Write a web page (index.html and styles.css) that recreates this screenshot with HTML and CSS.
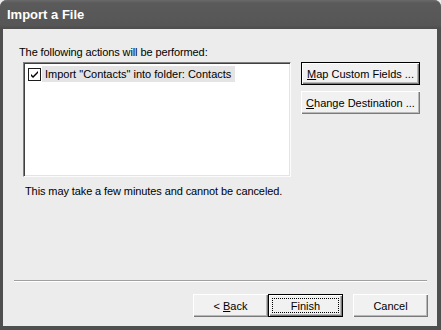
FILE: index.html
```html
<!DOCTYPE html>
<html>
<head>
<meta charset="utf-8">
<link rel="stylesheet" href="styles.css">
</head>
<body>
<div class="window">
  <div class="titlebar">Import a File</div>
  <div class="client">
    <div class="label">The following actions will be performed:</div>
    <div class="main-row">
      <div class="listbox">
        <div class="item">
          <span class="checkbox">
            <svg width="9" height="9" viewBox="0 0 9 9"><path d="M1 4 L3 6 L8 1 L8 3 L3 8 L1 6 Z" fill="#000"/></svg>
          </span>
          <span class="item-text">Import "Contacts" into folder: Contacts</span>
        </div>
      </div>
      <div class="side-buttons">
        <button class="btn btn-default"><u>M</u>ap Custom Fields ...</button>
        <button class="btn"><u>C</u>hange Destination ...</button>
      </div>
    </div>
    <div class="note">This may take a few minutes and cannot be canceled.</div>
    <div class="spacer"></div>
    <div class="separator"></div>
    <div class="footer">
      <button class="btn btn-small">&lt; <u>B</u>ack</button>
      <button class="btn btn-small btn-default btn-focus"><span class="focus">Finish</span></button>
      <button class="btn btn-small btn-cancel">Cancel</button>
    </div>
  </div>
</div>
</body>
</html>
```
FILE: styles.css
```css
* { box-sizing: border-box; }
html, body { margin: 0; padding: 0; background: #ececec; }
body {
  width: 441px;
  height: 330px;
  overflow: hidden;
  font-family: "Liberation Sans", Arial, sans-serif;
  font-size: 11px;
  color: #000;
}
.window {
  width: 441px;
  height: 330px;
  display: flex;
  flex-direction: column;
  background: #4f4f4f;
  border-radius: 7px 7px 0 0;
  box-shadow: inset 0 1px 0 #9a9a9a;
}
.titlebar {
  height: 29px;
  flex: none;
  padding: 7px 0 0 7px;
  color: #fff;
  font-weight: bold;
  font-size: 13px;
  background: linear-gradient(#6a6a6a 0, #5a5a5a 3px, #565656 25px, #4c4c4c 29px);
  border-radius: 7px 7px 0 0;
}
.client {
  flex: 1;
  margin: 0 4px 4px 3px;
  background: #ececec;
  display: flex;
  flex-direction: column;
  padding: 17px 0 9px 0;
}
.label {
  padding-left: 16px;
  line-height: 13px;
  height: 13px;
  letter-spacing: -0.1px;
}
.main-row {
  display: flex;
  margin-top: 3px;
  padding-left: 20px;
}
.listbox {
  width: 268px;
  height: 115px;
  background: #fff;
  border-top: 1px solid #808080;
  border-left: 1px solid #808080;
  border-right: 1px solid #fcfcfc;
  border-bottom: 1px solid #fcfcfc;
  box-shadow: inset 1px 1px 0 #404040, inset -1px -1px 0 #e4e4e4;
  padding: 3px 0 0 3px;
}
.item {
  display: flex;
  align-items: center;
  height: 16px;
}
.checkbox {
  width: 13px;
  height: 13px;
  border: 1px solid #1c1c1c;
  background: #fff;
  display: flex;
  align-items: center;
  justify-content: center;
  flex: none;
  margin-left: 1px;
}
.item-text {
  background: #e4e4e4;
  height: 16px;
  line-height: 16px;
  padding: 0 4px 0 3px;
  margin-left: 1px;
  white-space: nowrap;
}
.side-buttons {
  display: flex;
  flex-direction: column;
  gap: 6px;
  margin-left: 10px;
}
.btn {
  font-family: inherit;
  font-size: 11px;
  color: #000;
  background: #f1f1f1;
  border: none;
  border-radius: 0;
  padding: 0;
  margin: 0;
  width: 119px;
  height: 23px;
  text-align: center;
  white-space: nowrap;
  box-shadow: inset 1px 1px 0 #fff, inset -1px -1px 0 #7a7a7a, inset -2px -2px 0 #b8b8b8;
}
.btn-default {
  box-shadow: inset 0 0 0 1px #000, inset 2px 2px 0 #fff, inset -2px -2px 0 #7a7a7a, inset -3px -3px 0 #b8b8b8;
}
.btn u { text-decoration: underline; text-underline-offset: 1px; }
.note {
  padding-left: 22px;
  margin-top: 8px;
  line-height: 13px;
  letter-spacing: -0.1px;
}
.spacer { flex: 1; }
.separator {
  margin: 0 10px 0 11px;
  height: 2px;
  border-top: 1px solid #a0a0a0;
  border-bottom: 1px solid #fff;
}
.footer {
  display: flex;
  justify-content: flex-end;
  padding-right: 9px;
  margin-top: 12px;
}
.btn-small { width: 75px; }
.btn-cancel { margin-left: 10px; }
.btn-focus { display: flex; align-items: center; justify-content: center; padding: 4px; }
.focus {
  flex: 1;
  align-self: stretch;
  border: 1px dotted #000;
  display: flex;
  align-items: center;
  justify-content: center;
}
```
